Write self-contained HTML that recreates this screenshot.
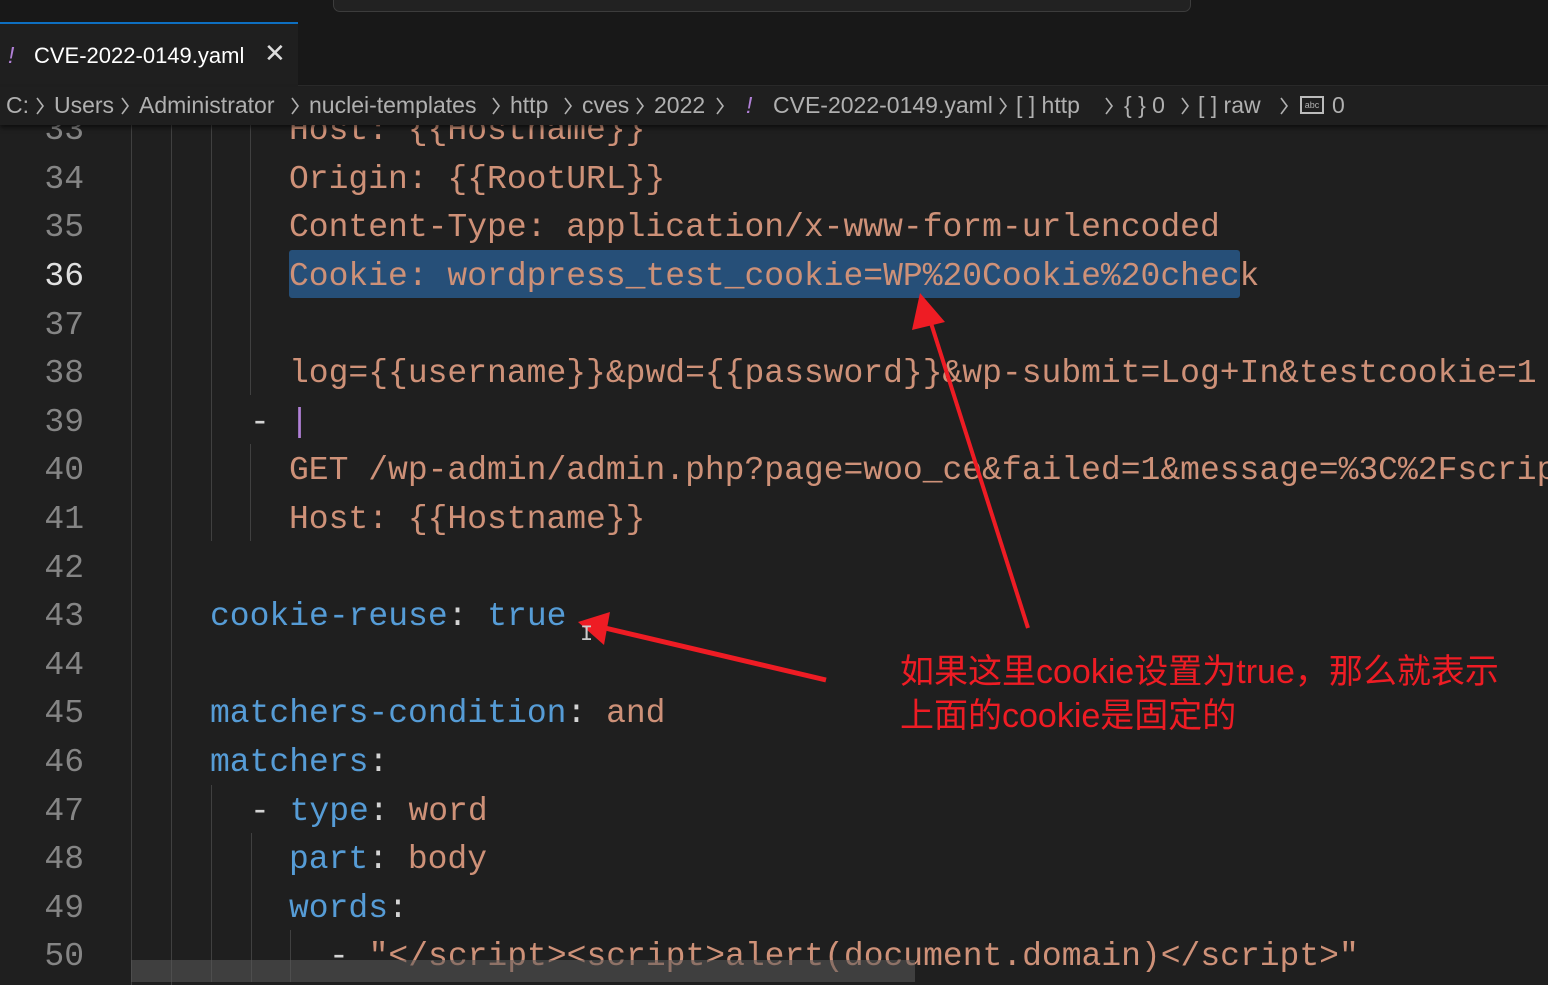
<!DOCTYPE html>
<html><head><meta charset="utf-8"><style>
*{margin:0;padding:0;box-sizing:border-box}
body{width:1548px;height:982px;overflow:hidden;background:#1f1f1f;position:relative;font-family:"Liberation Sans","Noto Sans CJK SC",sans-serif}
.title{position:absolute;left:0;top:0;width:1548px;height:22px;background:#181818}
.search{position:absolute;left:333px;top:-10px;width:858px;height:22px;border:1px solid #3c3c3c;border-radius:7px;background:#222}
.tabs{position:absolute;left:0;top:22px;width:1548px;height:64px;background:#181818;border-bottom:1px solid #2a2a2a}
.tab{position:absolute;left:0;top:0;width:298px;height:64px;background:#1f1f1f;border-top:2px solid #0e6fc0}
.tab .t{position:absolute;left:34px;top:19px;color:#fff;font-size:22px}
.tab .ex{position:absolute;left:8px;top:18px;color:#b180d7;font-size:23px;font-style:italic}
.tab .x{position:absolute;left:264px;top:14px;color:#ddd;font-size:26px}
.bc{position:absolute;left:0;top:87px;width:1548px;height:38px;background:#1f1f1f;color:#b0b0b0;font-size:23px;white-space:nowrap;z-index:3;box-shadow:0 3px 4px rgba(0,0,0,.5)}
.bc span{position:absolute;top:5px}
.bc svg{position:absolute;top:10px}
.code{position:absolute;left:0;top:3px;width:1548px;height:982px;font-family:"Liberation Mono",monospace;font-size:33px}
.ln{position:absolute;width:84px;text-align:right;left:0;color:#858585;line-height:48.6px}
.l{position:absolute;white-space:pre;line-height:48.6px;color:#ce9178}
.k{color:#569cd6}.w{color:#d4d4d4}
.g{position:absolute;width:1px;background:#404040}
.sel{position:absolute;left:289px;top:247px;width:951px;height:48px;background:#264f78;border-radius:3px}
.note{position:absolute;left:900px;color:#ee1c24;font-size:34px;line-height:44px;font-family:"Liberation Sans","Noto Sans CJK SC",sans-serif;white-space:nowrap}
</style></head><body>
<div class="title"><div class="search"></div></div>
<div class="tabs"><div class="tab"><span class="ex">!</span><span class="t">CVE-2022-0149.yaml</span><span class="x">✕</span></div></div>
<div class="bc">
<span style="left:6px">C:</span>
<span style="left:54px">Users</span>
<span style="left:139px">Administrator</span>
<span style="left:309px">nuclei-templates</span>
<span style="left:510px">http</span>
<span style="left:582px">cves</span>
<span style="left:654px">2022</span>
<span style="left:746px;color:#b180d7;font-style:italic">!</span>
<span style="left:773px">CVE-2022-0149.yaml</span>
<span style="left:1016px">[ ] http</span>
<span style="left:1124px">{ } 0</span>
<span style="left:1198px">[ ] raw</span>
<span style="left:1300px;top:9px;display:inline-block;width:24px;height:18px;border:2px solid #bbb;font-size:9px;text-align:center;line-height:14px">abc</span>
<span style="left:1332px">0</span>
<svg style="left:35px" width="10" height="18"><path d="M2 1 L8 9 L2 17" fill="none" stroke="#b0b0b0" stroke-width="1.6"/></svg>
<svg style="left:120px" width="10" height="18"><path d="M2 1 L8 9 L2 17" fill="none" stroke="#b0b0b0" stroke-width="1.6"/></svg>
<svg style="left:290px" width="10" height="18"><path d="M2 1 L8 9 L2 17" fill="none" stroke="#b0b0b0" stroke-width="1.6"/></svg>
<svg style="left:491px" width="10" height="18"><path d="M2 1 L8 9 L2 17" fill="none" stroke="#b0b0b0" stroke-width="1.6"/></svg>
<svg style="left:563px" width="10" height="18"><path d="M2 1 L8 9 L2 17" fill="none" stroke="#b0b0b0" stroke-width="1.6"/></svg>
<svg style="left:635px" width="10" height="18"><path d="M2 1 L8 9 L2 17" fill="none" stroke="#b0b0b0" stroke-width="1.6"/></svg>
<svg style="left:715px" width="10" height="18"><path d="M2 1 L8 9 L2 17" fill="none" stroke="#b0b0b0" stroke-width="1.6"/></svg>
<svg style="left:998px" width="10" height="18"><path d="M2 1 L8 9 L2 17" fill="none" stroke="#b0b0b0" stroke-width="1.6"/></svg>
<svg style="left:1104px" width="10" height="18"><path d="M2 1 L8 9 L2 17" fill="none" stroke="#b0b0b0" stroke-width="1.6"/></svg>
<svg style="left:1180px" width="10" height="18"><path d="M2 1 L8 9 L2 17" fill="none" stroke="#b0b0b0" stroke-width="1.6"/></svg>
<svg style="left:1279px" width="10" height="18"><path d="M2 1 L8 9 L2 17" fill="none" stroke="#b0b0b0" stroke-width="1.6"/></svg>
</div>
<div class="code">
<div class="g" style="left:131px;top:122px;height:860px"></div>
<div class="g" style="left:171px;top:122px;height:860px"></div>
<div class="g" style="left:211px;top:122px;height:416px"></div>
<div class="g" style="left:250px;top:122px;height:270px"></div>
<div class="g" style="left:250px;top:441px;height:97px"></div>
<div class="g" style="left:211px;top:782px;height:197px"></div>
<div class="g" style="left:251px;top:830px;height:149px"></div>
<div class="g" style="left:290px;top:927px;height:52px"></div>
<div class="sel"></div>
<div class="ln" style="top:104px">33</div>
<div class="ln" style="top:153px">34</div>
<div class="ln" style="top:201px">35</div>
<div class="ln" style="top:250px;color:#e0e0e0">36</div>
<div class="ln" style="top:299px">37</div>
<div class="ln" style="top:347px">38</div>
<div class="ln" style="top:396px">39</div>
<div class="ln" style="top:444px">40</div>
<div class="ln" style="top:493px">41</div>
<div class="ln" style="top:542px">42</div>
<div class="ln" style="top:590px">43</div>
<div class="ln" style="top:639px">44</div>
<div class="ln" style="top:687px">45</div>
<div class="ln" style="top:736px">46</div>
<div class="ln" style="top:785px">47</div>
<div class="ln" style="top:833px">48</div>
<div class="ln" style="top:882px">49</div>
<div class="ln" style="top:930px">50</div>
<div class="l" style="left:289px;top:104px">Host: {{Hostname}}</div>
<div class="l" style="left:289px;top:153px">Origin: {{RootURL}}</div>
<div class="l" style="left:289px;top:201px">Content-Type: application/x-www-form-urlencoded</div>
<div class="l" style="left:289px;top:250px">Cookie: wordpress_test_cookie=WP%20Cookie%20check</div>
<div class="l" style="left:289px;top:347px">log={{username}}&amp;pwd={{password}}&amp;wp-submit=Log+In&amp;testcookie=1</div>
<div class="l w" style="left:250px;top:396px">- <span style="color:#b180d7">|</span></div>
<div class="l" style="left:289px;top:444px">GET /wp-admin/admin.php?page=woo_ce&amp;failed=1&amp;message=%3C%2Fscript</div>
<div class="l" style="left:289px;top:493px">Host: {{Hostname}}</div>
<div class="l" style="left:210px;top:590px"><span class="k">cookie-reuse</span><span class="w">: </span><span class="k">true</span></div>
<div class="l" style="left:210px;top:687px"><span class="k">matchers-condition</span><span class="w">: </span>and</div>
<div class="l" style="left:210px;top:736px"><span class="k">matchers</span><span class="w">:</span></div>
<div class="l" style="left:250px;top:785px"><span class="w">- </span><span class="k">type</span><span class="w">: </span>word</div>
<div class="l" style="left:289px;top:833px"><span class="k">part</span><span class="w">: </span>body</div>
<div class="l" style="left:289px;top:882px"><span class="k">words</span><span class="w">:</span></div>
<div class="l" style="left:329px;top:930px"><span class="w">- </span>"&lt;/script&gt;&lt;script&gt;alert(document.domain)&lt;/script&gt;"</div>
</div>
<div style="position:absolute;left:131px;top:960px;width:784px;height:22px;background:rgba(90,90,90,.55)"></div>
<svg style="position:absolute;left:0;top:0" width="1548" height="982">
<line x1="1028" y1="628" x2="930" y2="320" stroke="#ee1c24" stroke-width="4"/>
<polygon points="920,293 912,330 945,322" fill="#ee1c24"/>
<line x1="826" y1="680" x2="605" y2="628" stroke="#ee1c24" stroke-width="5"/>
<polygon points="578,622 610,612 604,645" fill="#ee1c24"/>
<text x="580" y="640" fill="#ccc" font-size="22" font-family="Liberation Mono">I</text>
</svg>
<div class="note" style="top:650px">如果这里cookie设置为true，那么就表示</div>
<div class="note" style="top:694px">上面的cookie是固定的</div>
</body></html>
